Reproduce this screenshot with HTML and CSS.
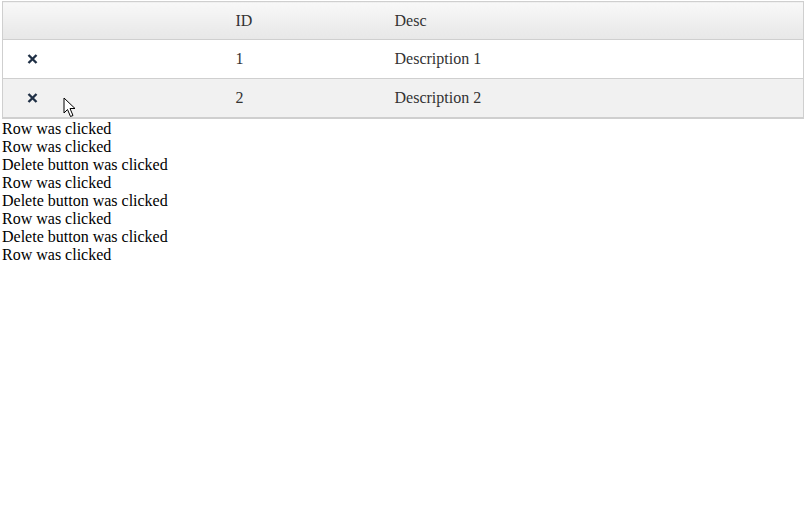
FILE: index.html
```html
<!DOCTYPE html>
<html>
<head>
<meta charset="utf-8">
<link rel="stylesheet" href="styles.css">
</head>
<body>
<table class="grid">
  <thead>
    <tr class="head">
      <th class="c-del"></th>
      <th class="c-id">ID</th>
      <th class="c-desc">Desc</th>
    </tr>
  </thead>
  <tbody>
    <tr class="row">
      <td class="c-del"><span class="del"><svg width="11" height="10" viewBox="0 0 11 10"><path d="M1.5 1 L9.5 9 M9.5 1 L1.5 9" stroke="#1f2f45" stroke-width="2.4" stroke-linecap="butt"/></svg></span></td>
      <td class="c-id">1</td>
      <td class="c-desc">Description 1</td>
    </tr>
    <tr class="row alt">
      <td class="c-del"><span class="del"><svg width="11" height="10" viewBox="0 0 11 10"><path d="M1.5 1 L9.5 9 M9.5 1 L1.5 9" stroke="#1f2f45" stroke-width="2.4" stroke-linecap="butt"/></svg></span>
        <svg class="cursor" width="14" height="21" viewBox="0 0 14 21"><path d="M1 1 L1 16 L4.5 12.5 L7.5 19.5 L10 18.5 L7 11.5 L12 11.5 Z" fill="#fff" stroke="#000" stroke-width="1" stroke-linejoin="miter"/></svg>
      </td>
      <td class="c-id">2</td>
      <td class="c-desc">Description 2</td>
    </tr>
  </tbody>
</table>
<div class="log">
  <div>Row was clicked</div>
  <div>Row was clicked</div>
  <div>Delete button was clicked</div>
  <div>Row was clicked</div>
  <div>Delete button was clicked</div>
  <div>Row was clicked</div>
  <div>Delete button was clicked</div>
  <div>Row was clicked</div>
</div>
</body>
</html>
```
FILE: styles.css
```css
html, body {
  background: #fff;
}
body {
  margin: 1px 3px 0 2px;
  font-family: "Liberation Serif", "Times New Roman", serif;
  font-size: 16px;
  color: #000;
}
.grid {
  width: 100%;
  border-collapse: collapse;
  border: 1px solid #cfcfcf;
  border-bottom: 2px solid #cfcfcf;
  color: #333;
}
.grid th, .grid td {
  height: 38px;
  padding: 0 0 0 8px;
  text-align: left;
  font-weight: normal;
  vertical-align: middle;
  border-top: 1px solid #cfcfcf;
  line-height: 18px;
}
.grid th {
  height: 37px;
}
.head th {
  background: linear-gradient(#f8f8f8, #e7e7e7);
}
.c-del {
  width: 225px;
  box-sizing: border-box;
  position: relative;
}
.c-id {
  width: 159px;
  box-sizing: border-box;
}
.row {
  background: #fff;
}
.row.alt {
  background: #f1f1f1;
}
.del {
  display: inline-flex;
  padding-left: 16px;
  vertical-align: middle;
  position: relative;
  top: -1px;
}
.cursor {
  position: absolute;
  left: 60px;
  top: 18px;
}
.log {
  margin-top: 1px;
  line-height: 18px;
}
```
